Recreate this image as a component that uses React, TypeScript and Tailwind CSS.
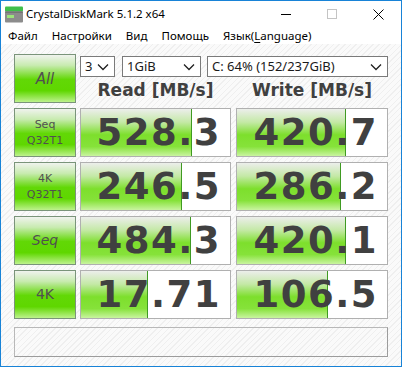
import React from 'react';

interface ResultRow {
    label: string[];
    italic?: boolean;
    small?: boolean;
    read: number;
    write: number;
}

const rows: ResultRow[] = [
    { label: ['Seq', 'Q32T1'], small: true, read: 528.3, write: 420.7 },
    { label: ['4K', 'Q32T1'], small: true, read: 246.5, write: 286.2 },
    { label: ['Seq'], italic: true, read: 484.3, write: 420.1 },
    { label: ['4K'], read: 17.71, write: 106.5 },
];

// CrystalDiskMark bars use a log scale: 0.1 .. 10000 MB/s
const barPercent = (v: number) => Math.max(0, Math.min(1, (Math.log10(v) + 1) / 5)) * 100;

const fmt = (v: number) => (v >= 100 ? v.toFixed(1) : v.toFixed(2));

const greenBtn =
    'bg-[linear-gradient(to_bottom,#f0f3ee_0%,#c8ebb0_22%,#62d806_52%,#5fd700_76%,#bdf28c_100%)] border border-[#7a947a]';

const Chevron = () => (
    <svg width="12" height="8" viewBox="0 0 12 8" className="shrink-0">
        <polyline points="1,1.5 6,6.5 11,1.5" fill="none" stroke="#202020" strokeWidth="1.3" />
    </svg>
);

const Select: React.FC<{ value: string; className?: string }> = ({ value, className }) => (
    <div
        className={`h-[21px] bg-white border border-[#7a7a7a] flex items-center justify-between pl-[4px] pr-[5px] text-[13px] text-[#1a1a1a] ${className || ''}`}
    >
        <span className="leading-none">{value}</span>
        <Chevron />
    </div>
);

const ValueBox: React.FC<{ value: number; className?: string }> = ({ value, className }) => (
    <div className={`relative h-[49px] bg-white border border-[#b0b0b0] ${className || ''}`}>
        <div
            className="absolute left-0 top-0 bottom-0 bg-[linear-gradient(to_bottom,#eceeeb_0%,#c4e9a6_28%,#7ddf2c_55%,#86e23a_80%,#c9f4a0_100%)] border-r border-[#3f9a22]"
            style={{ width: `${barPercent(value)}%` }}
        />
        <div className="relative h-full flex items-center justify-end pr-[9px] font-['DejaVu_Sans',sans-serif] font-bold text-[37px] tracking-[1.5px] text-[#404040] leading-none">
            {fmt(value)}
        </div>
    </div>
);

const AppIcon = () => (
    <svg width="20" height="17" viewBox="0 0 20 17">
        <rect x="1" y="0.5" width="18" height="5" rx="1" fill="#3fbf4a" />
        <rect x="1" y="5.5" width="18" height="11" rx="1" fill="#8c8c8c" />
        <rect x="1" y="5.5" width="18" height="1" fill="#5f5f5f" />
        <rect x="3" y="9" width="7" height="3" fill="#9be57a" />
    </svg>
);

export default function App() {
    return (
        <div className="w-[402px] h-[367px] border border-[#1883d7] flex flex-col font-['Noto_Sans',sans-serif] overflow-hidden">

            {/** Title bar */}
            <div className="h-[26px] bg-white flex items-center shrink-0">
                <div className="pl-[3px] pr-[2px] flex items-center">
                    <AppIcon />
                </div>
                <span className="text-[11.5px] text-black leading-none">CrystalDiskMark 5.1.2 x64</span>
                <div className="ml-auto flex items-center h-full">
                    <div className="w-[46px] h-full flex items-center justify-center">
                        <div className="w-[10px] h-px bg-black" />
                    </div>
                    <div className="w-[46px] h-full flex items-center justify-center">
                        <div className="w-[10px] h-[10px] border border-[#c4c4c4]" />
                    </div>
                    <div className="w-[46px] h-full flex items-center justify-center">
                        <svg width="11" height="11" viewBox="0 0 11 11">
                            <path d="M0.5 0.5 L10.5 10.5 M10.5 0.5 L0.5 10.5" stroke="#000" strokeWidth="1" />
                        </svg>
                    </div>
                </div>
            </div>

            {/** Menu */}
            <div className="h-[17px] bg-white flex items-center gap-[14px] pl-[7px] text-[11.5px] text-black leading-none shrink-0">
                <span>Файл</span>
                <span>Настройки</span>
                <span>Вид</span>
                <span>Помощь</span>
                <span>
                    Язык(<span className="underline underline-offset-2">L</span>anguage)
                </span>
            </div>

            {/** Client */}
            <div className="flex-1 bg-[repeating-linear-gradient(135deg,#fafafa_0px,#fafafa_3px,#efefef_3px,#efefef_4px)] px-[13px] pt-[10px] flex flex-col">

                {/** Top row */}
                <div className="flex h-[49px]">
                    <div className={`w-[62px] h-[49px] ${greenBtn} flex items-center justify-center pt-[2px]`}>
                        <span className="font-['DejaVu_Sans',sans-serif] italic text-[15px] text-[#505050]">All</span>
                    </div>
                    <div className="ml-[4px] flex-1 flex flex-col">
                        <div className="flex mt-[2px]">
                            <Select value="3" className="w-[35px]" />
                            <Select value="1GiB" className="w-[79px] ml-[7px]" />
                            <Select value="C: 64% (152/237GiB)" className="w-[181px] ml-[6px]" />
                        </div>
                        <div className="flex flex-1 items-center font-['DejaVu_Sans',sans-serif] font-bold text-[17px] text-[#404040] leading-none">
                            <div className="w-[151px] text-center">Read [MB/s]</div>
                            <div className="w-[152px] ml-[5px] text-center">Write [MB/s]</div>
                        </div>
                    </div>
                </div>

                {/** Results */}
                {rows.map((r, i) => (
                    <div key={i} className="flex h-[49px] mt-[5px]">
                        <div className={`w-[62px] h-[49px] ${greenBtn} flex flex-col items-center justify-center font-['DejaVu_Sans',sans-serif] text-[#505050]`}>
                            {r.label.map((l, j) => (
                                <span
                                    key={j}
                                    className={`${r.small ? 'text-[11px] leading-[16px]' : 'text-[14px]'} ${r.italic ? 'italic' : ''}`}
                                >
                                    {l}
                                </span>
                            ))}
                        </div>
                        <ValueBox value={r.read} className="w-[151px] ml-[4px]" />
                        <ValueBox value={r.write} className="w-[152px] ml-[5px]" />
                    </div>
                ))}

                {/** Comment */}
                <div className="mt-[8px] h-[30px] border border-[#b8b8b8] border-b-[#9c9c9c] border-r-[#9c9c9c]" />
            </div>
        </div>
    );
}
